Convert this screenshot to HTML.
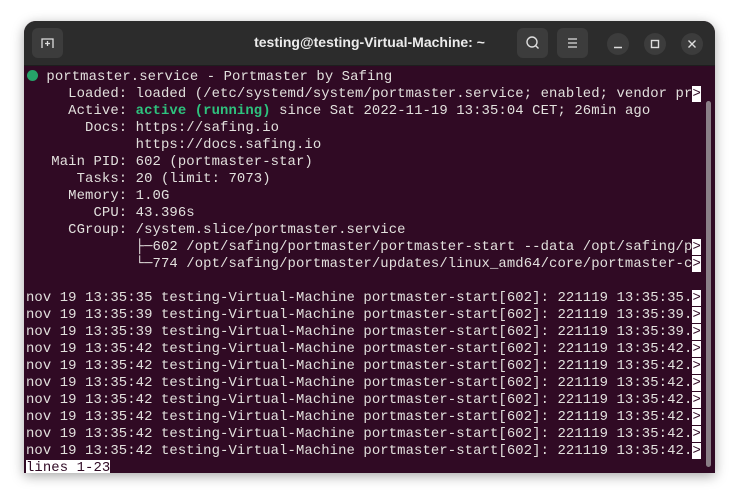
<!DOCTYPE html>
<html><head><meta charset="utf-8"><style>
html,body{margin:0;padding:0;background:#fff;width:739px;height:501px;overflow:hidden}
.win{position:absolute;left:24px;top:21px;width:691px;height:452px;border-radius:12px 12px 0 0;background:#300a24;overflow:hidden;box-shadow:0 3px 12px rgba(0,0,0,.35)}
.tb{position:absolute;left:0;top:0;width:691px;height:44px;background:#2c2c2c;border-bottom:1px solid #1e1e1e}
.title{position:absolute;left:0;width:691px;top:13px;text-align:center;font:bold 14px "Liberation Sans",sans-serif;color:#ececec}
.btn{position:absolute;top:7px;width:31px;height:30px;background:#3c3c3c;border-radius:6px}
.circ{position:absolute;top:12px;width:22px;height:22px;border-radius:50%;background:#3c3c3c}
pre{position:absolute;left:2px;top:48px;margin:0;font:13.9px/17px "Liberation Mono",monospace;color:#e2e0dd;letter-spacing:0.1px}
.g{color:#2ec27e;font-weight:bold;letter-spacing:0.1px}
.inv{background:#fff;color:#300a24}
.dot{display:inline-block;width:11px;height:11px;border-radius:50%;background:#26a269;vertical-align:-1px;margin-left:1px}
.sb{position:absolute;left:682px;top:80px;width:5px;height:366px;background:#8a7f87;border-radius:3px}
</style></head><body>
<div class="win">
<div class="tb">
<div class="btn" style="left:8px"><svg width="31" height="30"><path d="M10 20V11h11v9" fill="none" stroke="#ddd" stroke-width="1.3"/><path d="M15.5 13v5M13 15.5h5" stroke="#ddd" stroke-width="1.3"/></svg></div>
<div class="title">testing@testing-Virtual-Machine: ~</div>
<div class="btn" style="left:493px"><svg width="31" height="30"><circle cx="15" cy="14" r="5" fill="none" stroke="#ddd" stroke-width="1.4"/><path d="M18.5 17.5l3 3" stroke="#ddd" stroke-width="1.4"/></svg></div>
<div class="btn" style="left:533px"><svg width="31" height="30"><path d="M11 11h9M11 15h9M11 19h9" stroke="#ddd" stroke-width="1.3"/></svg></div>
<div class="circ" style="left:583px"><svg width="22" height="22"><path d="M7 14.5h8" stroke="#ddd" stroke-width="1.4"/></svg></div>
<div class="circ" style="left:620px"><svg width="22" height="22"><rect x="7.5" y="7.5" width="7" height="7" fill="none" stroke="#ddd" stroke-width="1.4"/></svg></div>
<div class="circ" style="left:657px"><svg width="22" height="22"><path d="M7.5 7.5l7 7M14.5 7.5l-7 7" stroke="#ddd" stroke-width="1.4"/></svg></div>
</div>
<pre><span class="dot"></span> portmaster.service - Portmaster by Safing
     Loaded: loaded (/etc/systemd/system/portmaster.service; enabled; vendor pr<span class="inv">&gt;</span>
     Active: <span class="g">active (running)</span> since Sat 2022-11-19 13:35:04 CET; 26min ago
       Docs: https://safing.io
             https://docs.safing.io
   Main PID: 602 (portmaster-star)
      Tasks: 20 (limit: 7073)
     Memory: 1.0G
        CPU: 43.396s
     CGroup: /system.slice/portmaster.service
             ├─602 /opt/safing/portmaster/portmaster-start --data /opt/safing/p<span class="inv">&gt;</span>
             └─774 /opt/safing/portmaster/updates/linux_amd64/core/portmaster-c<span class="inv">&gt;</span>

nov 19 13:35:35 testing-Virtual-Machine portmaster-start[602]: 221119 13:35:35.<span class="inv">&gt;</span>
nov 19 13:35:39 testing-Virtual-Machine portmaster-start[602]: 221119 13:35:39.<span class="inv">&gt;</span>
nov 19 13:35:39 testing-Virtual-Machine portmaster-start[602]: 221119 13:35:39.<span class="inv">&gt;</span>
nov 19 13:35:42 testing-Virtual-Machine portmaster-start[602]: 221119 13:35:42.<span class="inv">&gt;</span>
nov 19 13:35:42 testing-Virtual-Machine portmaster-start[602]: 221119 13:35:42.<span class="inv">&gt;</span>
nov 19 13:35:42 testing-Virtual-Machine portmaster-start[602]: 221119 13:35:42.<span class="inv">&gt;</span>
nov 19 13:35:42 testing-Virtual-Machine portmaster-start[602]: 221119 13:35:42.<span class="inv">&gt;</span>
nov 19 13:35:42 testing-Virtual-Machine portmaster-start[602]: 221119 13:35:42.<span class="inv">&gt;</span>
nov 19 13:35:42 testing-Virtual-Machine portmaster-start[602]: 221119 13:35:42.<span class="inv">&gt;</span>
nov 19 13:35:42 testing-Virtual-Machine portmaster-start[602]: 221119 13:35:42.<span class="inv">&gt;</span>
<span class="inv">lines 1-23</span></pre>
<div class="sb"></div>
</div>
</body></html>
